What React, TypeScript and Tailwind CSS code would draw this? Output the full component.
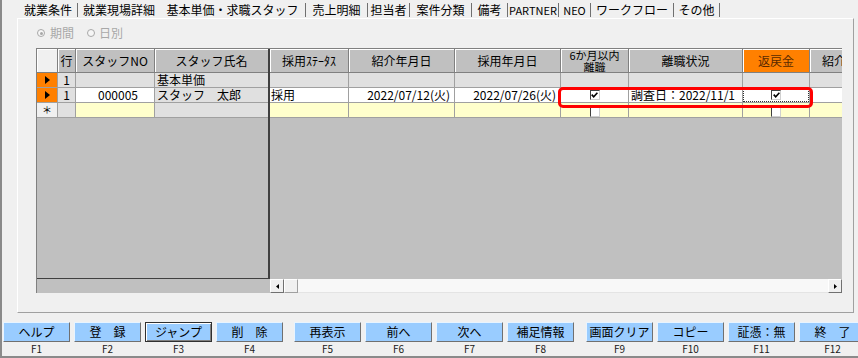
import React from 'react';

const tabs = [
  { label: '就業条件', cls: 'w-[59px] border-r' },
  { label: '就業現場詳細', cls: 'w-[82px]' },
  { label: '基本単価・求職スタッフ', cls: 'w-[146px] border-r' },
  { label: '売上明細', cls: 'w-[62px] border-r' },
  { label: '担当者', cls: 'w-[42px] border-r' },
  { label: '案件分類', cls: 'w-[62px] border-r' },
  { label: '備考', cls: 'w-[36px] border-r' },
  { label: 'PARTNER', cls: 'w-[51px] border-r text-[11px]' },
  { label: 'NEO', cls: 'w-[32px] border-r text-[11px]' },
  { label: 'ワークフロー', cls: 'w-[83px] border-r' },
  { label: 'その他', cls: 'w-[46px] border-r' },
];

const btns = [
  { label: 'ヘルプ', f: 'F1', ml: 'ml-[1px]' },
  { label: '登　録', f: 'F2', ml: 'ml-[4px]' },
  { label: 'ジャンプ', f: 'F3', ml: 'ml-[4px]', focus: true },
  { label: '削　除', f: 'F4', ml: 'ml-[4px]' },
  { label: '再表示', f: 'F5', ml: 'ml-[11px]' },
  { label: '前へ', f: 'F6', ml: 'ml-[4px]' },
  { label: '次へ', f: 'F7', ml: 'ml-[4px]' },
  { label: '補足情報', f: 'F8', ml: 'ml-[4px]' },
  { label: '画面クリア', f: 'F9', ml: 'ml-[12px]' },
  { label: 'コピー', f: 'F10', ml: 'ml-[4px]' },
  { label: '証憑：無', f: 'F11', ml: 'ml-[4px]' },
  { label: '終　了', f: 'F12', ml: 'ml-[4px]' },
];

function Arrow() {
  return (
    <svg width="5" height="8" viewBox="0 0 5 8">
      <polygon points="0,0 5,4 0,8" fill="#000" />
    </svg>
  );
}

function Check({ checked }: { checked?: boolean }) {
  return (
    <div className="w-[10px] h-[10px] shrink-0 bg-white border-t border-l border-[#404040] border-r border-b border-r-[#d0d0d0] border-b-[#d0d0d0] flex items-center justify-center">
      {checked && (
        <svg width="7" height="6" viewBox="0 0 7 6">
          <path d="M0.7 2.6 L2.7 4.8 L6.4 0.8" stroke="#000" strokeWidth="1.6" fill="none" />
        </svg>
      )}
    </div>
  );
}

function Radio({ on }: { on?: boolean }) {
  return (
    <div className="w-[8px] h-[8px] rounded-full border border-[#a8a8a8] bg-[#f6f6f6] flex items-center justify-center">
      {on && <div className="w-[3px] h-[3px] rounded-full bg-[#a8a8a8]" />}
    </div>
  );
}

const hd = 'h-full shrink-0 flex items-center justify-center border-r border-b border-[#808080] bg-[#c0c0c0] shadow-[inset_1px_1px_0_#ffffff] leading-[12px] text-center whitespace-nowrap overflow-hidden';
const cell = 'h-full shrink-0 flex items-center border-r border-b border-[#a0a0a0] overflow-hidden whitespace-nowrap leading-[12px]';

export default function App() {
  return (
    <div className="w-[858px] h-[358px] overflow-hidden bg-[#f0f0f0] border-l-2 border-b-2 border-[#8a8a8a] font-['Noto_Sans_CJK_JP',sans-serif] text-[12px] text-black">
      {/* tab strip */}
      <div className="h-[18px] pl-[17px] flex items-start pt-[3px]">
        {tabs.map((t) => (
          <div key={t.label} className={`${t.cls} h-[14px] shrink-0 flex items-center justify-center border-[#707070] leading-[14px] whitespace-nowrap`}>
            {t.label}
          </div>
        ))}
      </div>

      {/* tab page */}
      <div className="ml-[15px] w-[837px] h-[295px] border border-t-white border-l-white border-r-[#a0a0a0] border-b-[#a0a0a0]">
        <div className="mt-[8px] ml-[19px] h-[12px] flex items-center text-[#a8a8a8] leading-[12px]">
          <Radio on />
          <span className="ml-[5px]">期間</span>
          <div className="ml-[13px]">
            <Radio />
          </div>
          <span className="ml-[4px]">日別</span>
        </div>

        {/* grid */}
        <div className="relative mt-[9px] ml-[18px] w-[806px] h-[245px] border-l border-t border-[#808080] flex flex-col">
          <div className="h-[230px] flex">
            {/* frozen columns */}
            <div className="w-[233px] h-full shrink-0 bg-[#c0c0c0] border-r-2 border-b border-[#404040] flex flex-col">
              <div className="h-[24px] flex">
                <div className={`${hd} w-[21px] bg-[#f0f0f0]`} />
                <div className={`${hd} w-[18px]`}>行</div>
                <div className={`${hd} w-[79px]`}>スタッフNO</div>
                <div className={`${hd} w-[113px] border-r-0`}>スタッフ氏名</div>
              </div>
              <div className="h-[15px] flex">
                <div className={`${cell} w-[21px] bg-[#ff8000] justify-center`}>
                  <Arrow />
                </div>
                <div className={`${cell} w-[18px] bg-[#e0e0e0] justify-center`}>1</div>
                <div className={`${cell} w-[79px] bg-[#e0e0e0]`} />
                <div className={`${cell} w-[113px] bg-[#e0e0e0] border-r-0 pl-[2px]`}>基本単価</div>
              </div>
              <div className="h-[15px] flex">
                <div className={`${cell} w-[21px] bg-[#ff8000] justify-center`}>
                  <Arrow />
                </div>
                <div className={`${cell} w-[18px] bg-[#e0e0e0] justify-center`}>1</div>
                <div className={`${cell} w-[79px] bg-white justify-center pl-[6px]`}>000005</div>
                <div className={`${cell} w-[113px] bg-[#e0e0e0] border-r-0 pl-[2px]`}>スタッフ　太郎</div>
              </div>
              <div className="h-[15px] flex">
                <div className={`${cell} w-[21px] bg-[#f0f0f0] justify-center text-[10px]`}>＊</div>
                <div className={`${cell} w-[18px] bg-[#e0e0e0]`} />
                <div className={`${cell} w-[79px] bg-[#ffffcc]`} />
                <div className={`${cell} w-[113px] bg-[#e0e0e0] border-r-0`} />
              </div>
            </div>

            {/* scrolling columns */}
            <div className="flex-1 h-full bg-[#c0c0c0] overflow-hidden flex flex-col">
              <div className="h-[24px] flex">
                <div className={`${hd} w-[79px]`}>採用ｽﾃｰﾀｽ</div>
                <div className={`${hd} w-[106px]`}>紹介年月日</div>
                <div className={`${hd} w-[106px]`}>採用年月日</div>
                <div className={`${hd} w-[68px] flex-col text-[11px] leading-[10px]`}>
                  <span>6か月以内</span>
                  <span>離職</span>
                </div>
                <div className={`${hd} w-[114px]`}>離職状況</div>
                <div className={`${hd} w-[67px] bg-[#ff8000] text-[#5a2a00]`}>返戻金</div>
                <div className={`${hd} w-[62px] justify-start pl-[12px]`}>紹介料</div>
              </div>
              <div className="h-[15px] flex">
                <div className={`${cell} w-[79px] bg-[#e0e0e0]`} />
                <div className={`${cell} w-[106px] bg-[#e0e0e0]`} />
                <div className={`${cell} w-[106px] bg-[#e0e0e0]`} />
                <div className={`${cell} w-[68px] bg-[#e0e0e0]`} />
                <div className={`${cell} w-[114px] bg-[#e0e0e0]`} />
                <div className={`${cell} w-[67px] bg-[#e0e0e0]`} />
                <div className={`${cell} w-[62px] bg-[#e0e0e0]`} />
              </div>
              <div className="h-[15px] flex">
                <div className={`${cell} w-[79px] bg-white pl-[1px]`}>採用</div>
                <div className={`${cell} w-[106px] bg-white justify-end pr-[4px]`}>2022/07/12(火)</div>
                <div className={`${cell} w-[106px] bg-white justify-end pr-[4px]`}>2022/07/26(火)</div>
                <div className={`${cell} w-[68px] bg-white justify-center`}>
                  <Check checked />
                </div>
                <div className={`${cell} w-[114px] bg-white pl-[2px]`}>調査日：2022/11/1</div>
                <div className={`${cell} w-[67px] bg-white`}>
                  <div className="w-full h-full border border-dotted border-[#303030] flex items-center justify-center">
                    <Check checked />
                  </div>
                </div>
                <div className={`${cell} w-[62px] bg-white`} />
              </div>
              <div className="h-[15px] flex">
                <div className={`${cell} w-[79px] bg-[#ffffcc]`} />
                <div className={`${cell} w-[106px] bg-[#ffffcc]`} />
                <div className={`${cell} w-[106px] bg-[#ffffcc]`} />
                <div className={`${cell} w-[68px] bg-[#ffffcc] justify-center items-start pt-[4px]`}>
                  <Check />
                </div>
                <div className={`${cell} w-[114px] bg-[#ffffcc]`} />
                <div className={`${cell} w-[67px] bg-[#ffffcc] justify-center items-start pt-[4px]`}>
                  <Check />
                </div>
                <div className={`${cell} w-[62px] bg-[#ffffcc]`} />
              </div>
            </div>
          </div>

          {/* horizontal scroll bar */}
          <div className="h-[14px] flex">
            <div className="w-[233px] h-full shrink-0 bg-[#c0c0c0]" />
            <div className="w-[14px] h-full shrink-0 bg-[#f0f0f0] border border-t-white border-l-white border-r-[#707070] border-b-[#707070] flex items-center justify-center">
              <svg width="3" height="5" viewBox="0 0 3 5">
                <polygon points="3,0 0,2.5 3,5" fill="#000" />
              </svg>
            </div>
            <div className="w-[14px] h-full shrink-0 bg-[#f0f0f0] border border-t-white border-l-white border-r-[#a0a0a0] border-b-[#a0a0a0]" />
            <div className="flex-1 h-full bg-[#f8f8f8] border-b border-[#e4e4e4]" />
            <div className="w-[14px] h-full shrink-0 bg-[#f0f0f0] border border-t-white border-l-white border-r-[#707070] border-b-[#707070] flex items-center justify-center">
              <svg width="3" height="5" viewBox="0 0 3 5">
                <polygon points="0,0 3,2.5 0,5" fill="#000" />
              </svg>
            </div>
          </div>

          {/* highlight frame */}
          <div className="absolute left-[521px] top-[38px] w-[255px] h-[21px] border-[3px] border-[#ff0000] rounded-[5px]" />
        </div>
      </div>

      {/* function keys */}
      <div className="mt-[9px] flex">
        {btns.map((b) => (
          <div key={b.f} className={`${b.ml} w-[67px] shrink-0 flex flex-col`}>
            <div
              className={
                b.focus
                  ? 'h-[20px] flex items-center justify-center bg-[#99ccff] border border-[#303030] shadow-[inset_1px_1px_0_#ffffff,inset_-1px_-1px_0_#808080] whitespace-nowrap'
                  : 'h-[20px] flex items-center justify-center bg-[#99ccff] border border-t-[#e8f4ff] border-l-[#e8f4ff] border-r-[#707070] border-b-[#707070] whitespace-nowrap'
              }
            >
              {b.label}
            </div>
            <div className="h-[14px] flex items-center justify-center text-[10px] leading-[10px] text-[#202020]">{b.f}</div>
          </div>
        ))}
      </div>
    </div>
  );
}
